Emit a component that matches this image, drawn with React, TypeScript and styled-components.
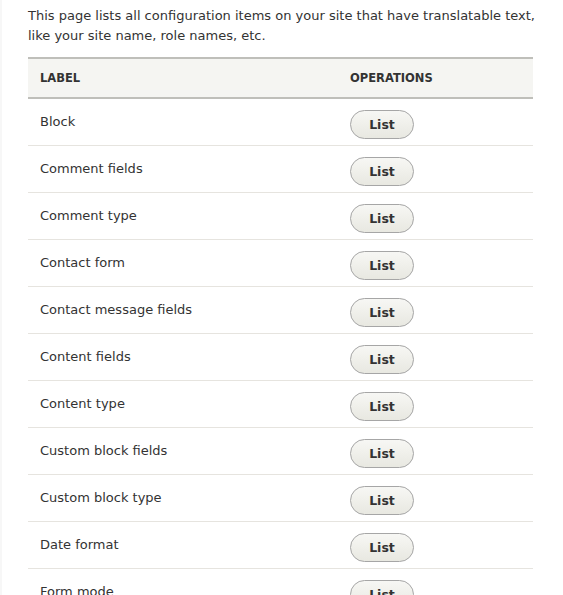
import React from "react"
import styled, {createGlobalStyle} from "styled-components"

const GlobalStyle = createGlobalStyle`
  html, body {
    margin: 0;
    padding: 0;
    background: #ffffff;
  }
  body {
    font-family: "DejaVu Sans", "Lucida Grande", sans-serif;
    color: #333;
  }
`

const Page = styled.div`
  width: 563px;
  height: 595px;
  overflow: hidden;
  box-sizing: border-box;
  padding: 0 8px 0 26px;
  border-left: 2px solid #f7f7f7;
`

const Intro = styled.p`
  margin: 6px 0 11px;
  font-size: 13px;
  line-height: 20px;
  color: #333;
`

const Table = styled.table`
  width: 505px;
  border-collapse: collapse;
  font-size: 13px;
`

const HeadCell = styled.th<{width?: number}>`
  width: ${props => (props.width ? `${props.width}px` : "auto")};
  padding: 12px 12px 12px;
  text-align: left;
  font-size: 11.5px;
  font-weight: bold;
  text-transform: uppercase;
  color: #333;
  background: #f5f5f2;
  border-top: 2px solid #bfbfba;
  border-bottom: 2px solid #bfbfba;
  line-height: 14px;
`

const Row = styled.tr`
  border-bottom: 1px solid #e6e4df;
`

const Cell = styled.td`
  padding: 0 12px;
  height: 46px;
  vertical-align: top;
`

const Label = styled.div`
  padding-top: 15px;
  line-height: 16px;
`

const ListButton = styled.button`
  margin-top: 11px;
  width: 64px;
  height: 29px;
  border: 1px solid #a6a6a6;
  border-radius: 20em;
  background: linear-gradient(to bottom, #f7f7f4, #e8e8e1);
  font-family: "DejaVu Sans", "Lucida Grande", sans-serif;
  font-size: 12.5px;
  font-weight: bold;
  color: #333;
  padding: 0;
  cursor: pointer;
`

const items = [
  "Block",
  "Comment fields",
  "Comment type",
  "Contact form",
  "Contact message fields",
  "Content fields",
  "Content type",
  "Custom block fields",
  "Custom block type",
  "Date format",
  "Form mode"
]

const App: React.FC = () => {
  return (
    <>
      <GlobalStyle />
      <Page>
        <Intro>
          This page lists all configuration items on your site that have translatable text,
          like your site name, role names, etc.
        </Intro>
        <Table>
          <thead>
            <tr>
              <HeadCell width={286}>Label</HeadCell>
              <HeadCell>Operations</HeadCell>
            </tr>
          </thead>
          <tbody>
            {items.map(item => (
              <Row key={item}>
                <Cell>
                  <Label>{item}</Label>
                </Cell>
                <Cell>
                  <ListButton>List</ListButton>
                </Cell>
              </Row>
            ))}
          </tbody>
        </Table>
      </Page>
    </>
  )
}

export default App
